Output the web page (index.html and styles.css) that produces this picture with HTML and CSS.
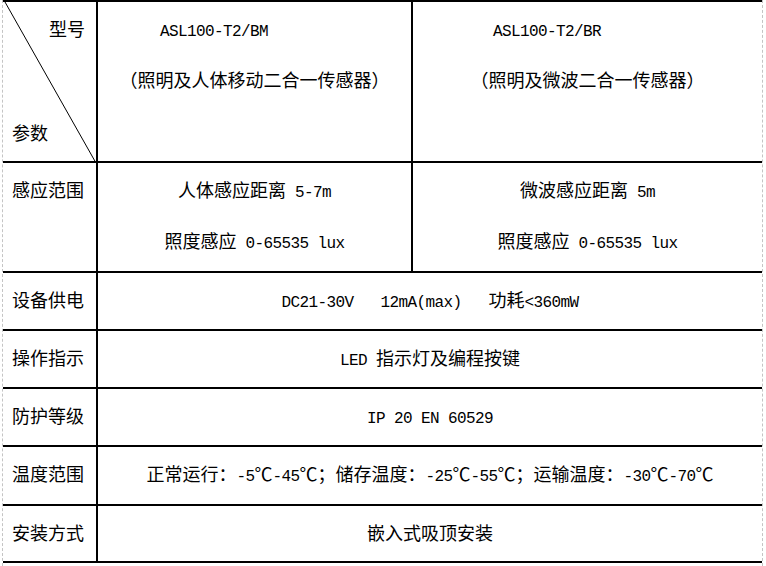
FILE: index.html
```html
<!DOCTYPE html>
<html lang="zh">
<head>
<meta charset="utf-8">
<link rel="stylesheet" href="styles.css">
</head>
<body>
<div class="sheet">
  <div class="table">
    <div class="cell head-label">
      <svg class="diag" width="93" height="161" viewBox="0 0 93 161"><line x1="2" y1="0" x2="93" y2="161" stroke="#000" stroke-width="1"/></svg>
      <div class="hl-top">型号</div>
      <div class="hl-bottom">参数</div>
    </div>
    <div class="cell col2">
      <div class="model m1"><span class="en">ASL100-T2/BM</span></div>
      <div class="center">（照明及人体移动二合一传感器）</div>
    </div>
    <div class="cell col3">
      <div class="model m2"><span class="en">ASL100-T2/BR</span></div>
      <div class="center">（照明及微波二合一传感器）</div>
    </div>

    <div class="cell label r2">感应范围</div>
    <div class="cell col2 r2">
      <div class="center">人体感应距离<span class="en"> 5-7m</span></div>
      <div class="center">照度感应<span class="en"> 0-65535 lux</span></div>
    </div>
    <div class="cell col3 r2">
      <div class="center">微波感应距离<span class="en"> 5m</span></div>
      <div class="center">照度感应<span class="en"> 0-65535 lux</span></div>
    </div>

    <div class="cell label r3">设备供电</div>
    <div class="cell wide r3"><span class="en">DC21-30V   12mA(max)   </span>功耗<span class="en">&lt;360mW</span></div>

    <div class="cell label r4">操作指示</div>
    <div class="cell wide r4"><span class="en">LED </span>指示灯及编程按键</div>

    <div class="cell label r5">防护等级</div>
    <div class="cell wide r5"><span class="en">IP 20 EN 60529</span></div>

    <div class="cell label r6">温度范围</div>
    <div class="cell wide r6">正常运行：<span class="en">-5</span>℃<span class="en">-45</span>℃；储存温度：<span class="en">-25</span>℃<span class="en">-55</span>℃；运输温度：<span class="en">-30</span>℃<span class="en">-70</span>℃</div>

    <div class="cell label r7">安装方式</div>
    <div class="cell wide r7">嵌入式吸顶安装</div>
  </div>
</div>
</body>
</html>
```

FILE: styles.css
```css
html, body {
  margin: 0;
  padding: 0;
  background: #fff;
}

body {
  width: 766px;
  height: 566px;
  overflow: hidden;
  font-family: "Noto Sans CJK SC", "Noto Sans", sans-serif;
  font-size: 18px;
  color: #000;
}

.sheet {
  margin-left: 2px;
  width: 759px;
  height: 566px;
  border-left: 1px dashed #c4c4c4;
  border-right: 1px dashed #c4c4c4;
}

.table {
  display: grid;
  grid-template-columns: 93px 315px 351px;
  grid-template-rows: 161px 110px 58px 58px 58px 59px 57px;
  border-top: 2px solid #000;
}

.cell {
  box-sizing: border-box;
  border-bottom: 2px solid #000;
  padding-top: 1px;
  line-height: 51px;
  white-space: nowrap;
}

.col2, .col3, .wide {
  border-left: 2px solid #000;
}

.wide {
  grid-column: 2 / 4;
  text-align: center;
}

.label {
  padding-left: 9px;
}

.center {
  text-align: center;
}

.en {
  font-family: "Liberation Mono", monospace;
  font-size: 16px;
  line-height: 1;
  letter-spacing: -0.6px;
  white-space: pre;
}

.model.m1 {
  padding-left: 62px;
}

.model.m2 {
  padding-left: 80px;
}

.head-label {
  position: relative;
  display: flex;
  flex-direction: column;
  justify-content: space-between;
}

.diag {
  position: absolute;
  left: 0;
  top: 0;
}

.hl-top {
  padding-left: 46px;
}

.hl-bottom {
  padding-left: 9px;
  padding-bottom: 3px;
}
```
